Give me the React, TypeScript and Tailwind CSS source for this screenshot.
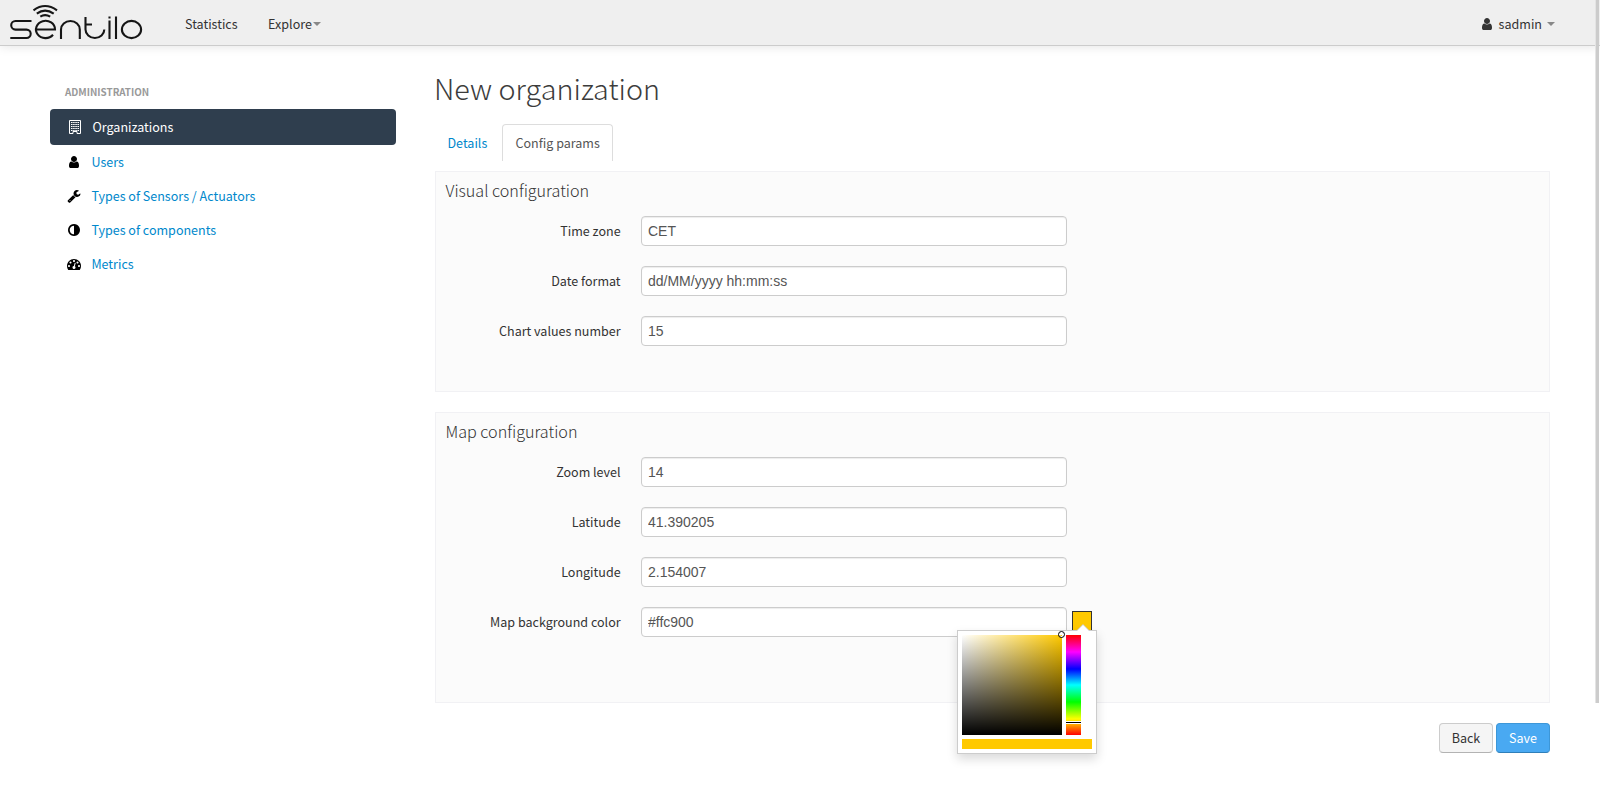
import React from 'react';

const FA = {
  user: 'M1536 1399q0 109-62.5 187t-150.5 78h-854q-88 0-150.5-78t-62.5-187q0-85 8.5-160.5t31.5-152 58.5-131 94-89 134.5-34.5q131 128 313 128t313-128q76 0 134.5 34.5t94 89 58.5 131 31.5 152 8.5 160.5zm-256-887q0 159-112.5 271.5t-271.5 112.5-271.5-112.5-112.5-271.5 112.5-271.5 271.5-112.5 271.5 112.5 112.5 271.5z',
  wrench:
    'M448 1472q0-26-19-45t-45-19-45 19-19 45 19 45 45 19 45-19 19-45zm644-420l-682 682q-37 37-90 37-52 0-91-37l-106-108q-38-36-38-90 0-53 38-91l681-681q39 98 114.5 173.5t173.5 114.5zm634-435q0 39-23 106-47 134-164.5 217.5t-258.5 83.5q-185 0-316.5-131.5t-131.5-316.5 131.5-316.5 316.5-131.5q58 0 121.5 16.5t107.5 46.5q16 11 16 28t-16 28l-293 169v224l193 107q5-3 79-48.5t135.5-81 70.5-35.5q15 0 23.5 10t8.5 25z',
  adjust:
    'M896 1440v-1088q-148 0-273 73t-198 198-73 273 73 273 198 198 273 73zm768-544q0 209-103 385.5t-279.5 279.5-385.5 103-385.5-103-279.5-279.5-103-385.5 103-385.5 279.5-279.5 385.5-103 385.5 103 279.5 279.5 103 385.5z',
  gauge:
    'M384 1152q0-53-37.5-90.5t-90.5-37.5-90.5 37.5-37.5 90.5 37.5 90.5 90.5 37.5 90.5-37.5 37.5-90.5zm192-448q0-53-37.5-90.5t-90.5-37.5-90.5 37.5-37.5 90.5 37.5 90.5 90.5 37.5 90.5-37.5 37.5-90.5zm428 481l101-382q6-26-7.5-48.5t-38.5-29.5-48 6.5-30 39.5l-101 382q-60 5-107 43.5t-63 98.5q-20 77 20 146t117 89 146-20 89-117q16-60-6-117t-72-91zm660-33q0-53-37.5-90.5t-90.5-37.5-90.5 37.5-37.5 90.5 37.5 90.5 90.5 37.5 90.5-37.5 37.5-90.5zm-640-640q0-53-37.5-90.5t-90.5-37.5-90.5 37.5-37.5 90.5 37.5 90.5 90.5 37.5 90.5-37.5 37.5-90.5zm448 192q0-53-37.5-90.5t-90.5-37.5-90.5 37.5-37.5 90.5 37.5 90.5 90.5 37.5 90.5-37.5 37.5-90.5zm320 448q0 261-141 483-19 29-54 29h-1402q-35 0-54-29-141-221-141-483 0-182 71-348t191-286 286-191 348-71 348 71 286 191 191 286 71 348z',
};

function Icon({ d, className = '' }: { d: string; className?: string }) {
  return (
    <svg viewBox="0 0 1792 1792" className={`h-[14px] w-[14px] shrink-0 overflow-visible ${className}`} fill="currentColor">
      <path d={d} />
    </svg>
  );
}

function Logo() {
  return (
    <svg viewBox="0 0 150 45" className="h-[45px] w-[150px] shrink-0" fill="none" stroke="#161616" strokeWidth="2.1">
      <path d="M31.500 21H15.500a4.300 4.300 0 0 0 0 8.600H26.500a4.200 4.200 0 0 1 0 8.400H10.300" />
      <path d="M36.500 29.500H55A9.500 8.700 0 1 0 53 34.800" />
      <path d="M61 39V29.500a9.400 8.500 0 0 1 18.800 0V39" />
      <path d="M85.500 17V29.500A9.400 8.500 0 0 0 104.300 29.500M85.500 24.500H92" />
      <path d="M109.500 20.500V39M109.500 16.500V18.500M116 16.500V39" />
      <ellipse cx="131.500" cy="29.500" rx="9.600" ry="8.600" />
      <path d="M33.500 10.300Q45 1.800 57 10.300M36.800 13.700Q45 7.500 53.700 13.700M40.300 16.700Q45 13.500 50.200 16.700" />
    </svg>
  );
}

function Building() {
  return (
    <svg viewBox="0 0 12 14" className="h-[14px] w-[12px] shrink-0" fill="none" stroke="#fff">
      <path d="M.5 .5H11.500V13.500H8V11.500H4V13.500H.5Z" />
      <path d="M2 2.500H10M2 4.500H10M2 6.500H10M2 8.500H10M2 10.500H10" strokeDasharray="1.550 .6" />
    </svg>
  );
}

function Caret() {
  return <span className="border-x-4 border-t-4 border-x-transparent border-t-[#888]" />;
}

function Field({ label, value, children }: { label: string; value: string; children?: React.ReactNode }) {
  return (
    <div className="flex h-[30px] items-start">
      <div className="w-[184.600px] pt-[5px] text-right leading-5">{label}</div>
      <input
        defaultValue={value}
        className="ml-[20.400px] h-[30px] w-[426px] rounded border border-[#ccc] bg-white px-[6px] font-['Liberation_Sans',sans-serif] text-[14px] text-[#555] shadow-[inset_0_1px_1px_rgba(0,0,0,0.075)] outline-none"
      />
      {children}
    </div>
  );
}

function ColorPicker() {
  return (
    <div className="absolute top-[18px] -left-[116px] h-[124px] w-[140px] border border-[#ccc] bg-white p-1 shadow-[0_5px_10px_rgba(0,0,0,0.15)]">
      <svg className="absolute -top-[7px] left-[118px] h-[7px] w-[14px]" viewBox="0 0 14 7">
        <path d="M0 7L7 0L14 7Z" fill="#ccc" />
        <path d="M1 7L7 1L13 7Z" fill="#fff" />
      </svg>
      <div className="flex gap-1">
        <div className="relative h-[100px] w-[100px] bg-[linear-gradient(to_top,#000,transparent),linear-gradient(to_right,#fff,#ffc900)]">
          <span className="absolute -top-1 left-[96px] h-[7px] w-[7px] rounded-full border border-black shadow-[inset_0_0_0_1px_#fff]" />
        </div>
        <div className="relative h-[100px] w-[15px] bg-[linear-gradient(to_bottom,#f00,#f0f_17%,#00f_34%,#0ff_50%,#0f0_67%,#ff0_84%,#f00)]">
          <span className="absolute top-[86px] left-0 h-[3px] w-[15px] border-y border-white bg-black" />
        </div>
      </div>
      <div className="mt-1 h-[10px] w-[130px] bg-[#ffc900]" />
    </div>
  );
}

const navItems = [
  { label: 'Users', d: FA.user },
  { label: 'Types of Sensors / Actuators', d: FA.wrench },
  { label: 'Types of components', d: FA.adjust },
  { label: 'Metrics', d: FA.gauge },
];

export default function App() {
  return (
    <div className="relative h-[800px] w-[1600px] overflow-hidden bg-white font-['Noto_Sans_CJK_SC',sans-serif] text-[12.540px] text-[#333]">
      <header className="flex h-[46px] items-center border-b border-[#ccc] bg-[#efefef] shadow-[0_1px_10px_rgba(0,0,0,0.1)]">
        <Logo />
        <span className="ml-[35px] pt-[3px]">Statistics</span>
        <span className="ml-[30.500px] flex items-center pt-[3px]">Explore<span className="w-px" /><Caret /></span>
        <div className="mr-[45px] ml-auto flex items-center pt-[3px]">
          <Icon d={FA.user} />
          <span className="mr-[5px] ml-[5px]">sadmin</span>
          <Caret />
        </div>
      </header>
      <div className="absolute top-0 left-[1595px] h-[703px] w-1 border-l border-[#e4e4e4] bg-[#ccc]" />

      <main className="flex">
        <aside className="ml-[50px] w-[346px] pt-[36px]">
          <h2 className="h-[27px] px-[15px] text-[9.850px] leading-5 font-bold text-[#999]">ADMINISTRATION</h2>
          <div className="flex h-[36px] items-center rounded bg-[#2f3e4e] pl-[19px] text-white">
            <Building />
            <span className="ml-[11.500px]">Organizations</span>
          </div>
          {navItems.map((item) => (
            <div key={item.label} className="flex h-[34px] items-center pl-[17px] text-[#08c]">
              <Icon d={item.d} className="text-black" />
              <span className="ml-[10.400px]">{item.label}</span>
            </div>
          ))}
        </aside>

        <section className="ml-[39px] w-[1115px]">
          <h1 className="-ml-px mt-[22px] h-[40px] text-[28.750px] leading-[40px] font-light text-[#3c3c3c]">New organization</h1>
          <div className="mt-[16px] flex h-[37px] leading-[37px]">
            <span className="w-[67px] pl-[12.500px] text-[#08c]">Details</span>
            <span className="w-[111px] rounded-t border border-b-0 border-[#ddd] bg-white pl-[12.500px] leading-[35px] text-[#555]">Config params</span>
          </div>

          <div className="mt-[10px] h-[221px] border border-[#f1f1f4] bg-[#fbfbfb]">
            <h3 className="h-[44px] pl-[9.500px] text-[16.150px] leading-[36px] font-light">Visual configuration</h3>
            <div className="flex flex-col gap-5">
              <Field label="Time zone" value="CET" />
              <Field label="Date format" value="dd/MM/yyyy hh:mm:ss" />
              <Field label="Chart values number" value="15" />
            </div>
          </div>

          <div className="mt-5 h-[291px] border border-[#f1f1f4] bg-[#fbfbfb]">
            <h3 className="h-[44px] pl-[9.500px] text-[16.150px] leading-[36px] font-light">Map configuration</h3>
            <div className="flex flex-col gap-5">
              <Field label="Zoom level" value="14" />
              <Field label="Latitude" value="41.390205" />
              <Field label="Longitude" value="2.154007" />
              <Field label="Map background color" value="#ffc900">
                <div className="relative mt-1 ml-[5px] h-[20px] w-[20px] border border-[#333] bg-[#ffc900]">
                  <ColorPicker />
                </div>
              </Field>
            </div>
          </div>

          <div className="mt-5 flex justify-end gap-[3px]">
            <button className="h-[30px] w-[54px] rounded border border-[#ccc] border-b-[#b3b3b3] bg-[#f5f5f5]">Back</button>
            <button className="h-[30px] w-[54px] rounded border border-[#3d97d8] border-b-[#2f7fb9] bg-[#49a9f2] text-white">Save</button>
          </div>
        </section>
      </main>
    </div>
  );
}
